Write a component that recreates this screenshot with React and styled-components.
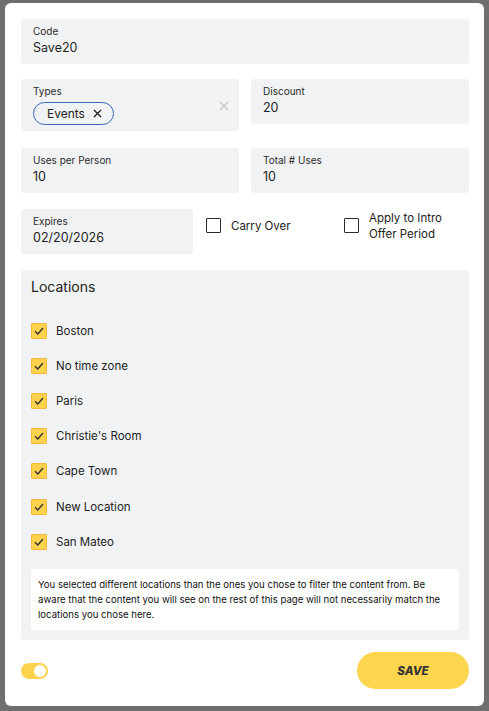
import React from "react";
import styled, { createGlobalStyle } from "styled-components";

const Global = createGlobalStyle`
  html, body { margin: 0; padding: 0; background: #6f6f6f; }
  body { font-family: Inter, "Noto Sans", "Liberation Sans", sans-serif; color: #222; }
  * { box-sizing: border-box; }
`;

const Backdrop = styled.div`
  width: 489px;
  height: 711px;
  background: #6f6f6f;
  padding: 3px 5px 0 5px;
`;

const Modal = styled.div`
  width: 479px;
  height: 703px;
  background: #fff;
  border-radius: 6px;
  padding: 16px 15px 17px 16px;
  display: flex;
  flex-direction: column;
`;

const Row = styled.div`
  display: flex;
  gap: ${(p) => (p.$gap === undefined ? 12 : p.$gap)}px;
  align-items: flex-start;
  margin-top: ${(p) => p.$mt || 0}px;
`;

const Field = styled.div`
  flex: ${(p) => (p.$width ? "0 0 auto" : "1 1 0")};
  width: ${(p) => (p.$width ? `${p.$width}px` : "auto")};
  min-height: ${(p) => p.$h || 45}px;
  background: #f1f2f4;
  border-radius: 3px;
  padding: 5px 12px 0 12px;
  position: relative;
`;

const Label = styled.div`
  font-size: 10px;
  line-height: 14px;
  color: #2b2b2b;
`;

const Value = styled.div`
  font-size: 12.5px;
  line-height: 18px;
  color: #1e1e1e;
  margin-top: 1px;
`;

const Chip = styled.div`
  display: inline-flex;
  align-items: center;
  gap: 8px;
  height: 23px;
  margin-top: 4px;
  padding: 0 11px 0 13px;
  border: 1px solid #3a66b8;
  border-radius: 12px;
  font-size: 12px;
  color: #222;
`;

const ClearX = styled.div`
  position: absolute;
  right: 10px;
  top: 22px;
  line-height: 0;
`;

const CheckWrap = styled.label`
  display: flex;
  align-items: flex-start;
  gap: 10px;
  font-size: 11.5px;
  line-height: 16px;
  color: #222;
  flex: 0 0 auto;
  width: ${(p) => p.$w}px;
  margin-left: ${(p) => p.$ml || 0}px;
  padding-top: ${(p) => p.$pt || 0}px;
`;

const Box = styled.span`
  width: 15px;
  height: 15px;
  border: 1.5px solid #2a2a2a;
  border-radius: 1px;
  flex: 0 0 auto;
  margin-top: ${(p) => p.$mt || 0}px;
`;

const Locations = styled.div`
  margin-top: 16px;
  background: #f1f2f4;
  border-radius: 3px;
  padding: 8px 10px 10px 10px;
  display: flex;
  flex-direction: column;
`;

const Title = styled.div`
  font-size: 14px;
  line-height: 18px;
  color: #222;
`;

const List = styled.div`
  display: flex;
  flex-direction: column;
  margin-top: 17px;
`;

const LocRow = styled.div`
  display: flex;
  align-items: center;
  gap: 9px;
  height: 35.2px;
  font-size: 11.5px;
  color: #222;
`;

const YBox = styled.span`
  width: 16px;
  height: 16px;
  background: #fdd34e;
  border: 1px solid #f6b73c;
  border-radius: 1px;
  display: flex;
  align-items: center;
  justify-content: center;
`;

const Notice = styled.div`
  margin-top: 10px;
  background: #fff;
  border-radius: 4px;
  padding: 8px 7px 8px 7px;
  font-size: 9.6px;
  line-height: 15px;
  color: #111;
`;

const Footer = styled.div`
  margin-top: 12px;
  display: flex;
  align-items: center;
  justify-content: space-between;
`;

const Toggle = styled.div`
  width: 27px;
  height: 16px;
  border-radius: 8px;
  background: #fdd34e;
  position: relative;
  &::after {
    content: "";
    position: absolute;
    right: 2px;
    top: 2px;
    width: 12px;
    height: 12px;
    border-radius: 50%;
    background: #fff;
  }
`;

const Save = styled.button`
  width: 112px;
  height: 37px;
  border: none;
  border-radius: 19px;
  background: #fed54f;
  font-family: Inter, "Liberation Sans", sans-serif;
  font-size: 11.5px;
  font-weight: 800;
  font-style: italic;
  color: #333;
  letter-spacing: 0.1px;
`;

const Check = () => (
  <svg width="10" height="8" viewBox="0 0 10 8">
    <path d="M1 4.2 L3.8 7 L9 1" fill="none" stroke="#333" strokeWidth="1.4" />
  </svg>
);

const locations = ["Boston", "No time zone", "Paris", "Christie's Room", "Cape Town", "New Location", "San Mateo"];

export default function App() {
  return (
    <>
      <Global />
      <Backdrop>
        <Modal>
          <Field>
            <Label>Code</Label>
            <Value>Save20</Value>
          </Field>
          <Row $mt={15}>
            <Field $h={52}>
              <Label>Types</Label>
              <Chip>
                Events
                <svg width="9" height="9" viewBox="0 0 9 9">
                  <path d="M1 1 L8 8 M8 1 L1 8" stroke="#222" strokeWidth="1.4" />
                </svg>
              </Chip>
              <ClearX>
                <svg width="10" height="10" viewBox="0 0 10 10">
                  <path d="M1 1 L9 9 M9 1 L1 9" stroke="#c4c6ca" strokeWidth="1.3" />
                </svg>
              </ClearX>
            </Field>
            <Field>
              <Label>Discount</Label>
              <Value>20</Value>
            </Field>
          </Row>
          <Row $mt={17}>
            <Field>
              <Label>Uses per Person</Label>
              <Value>10</Value>
            </Field>
            <Field>
              <Label>Total # Uses</Label>
              <Value>10</Value>
            </Field>
          </Row>
          <Row $mt={16} $gap={0}>
            <Field $width={172}>
              <Label>Expires</Label>
              <Value>02/20/2026</Value>
            </Field>
            <CheckWrap $w={138} $ml={13} $pt={9}>
              <Box />
              Carry Over
            </CheckWrap>
            <CheckWrap $w={120} $pt={1}>
              <Box $mt={8} />
              <span>
                Apply to Intro
                <br />
                Offer Period
              </span>
            </CheckWrap>
          </Row>
          <Locations>
            <Title>Locations</Title>
            <List>
              {locations.map((l) => (
                <LocRow key={l}>
                  <YBox>
                    <Check />
                  </YBox>
                  {l}
                </LocRow>
              ))}
            </List>
            <Notice>
              You selected different locations than the ones you chose to filter the content from. Be aware that the
              content you will see on the rest of this page will not necessarily match the locations you chose here.
            </Notice>
          </Locations>
          <Footer>
            <Toggle />
            <Save>SAVE</Save>
          </Footer>
        </Modal>
      </Backdrop>
    </>
  );
}
